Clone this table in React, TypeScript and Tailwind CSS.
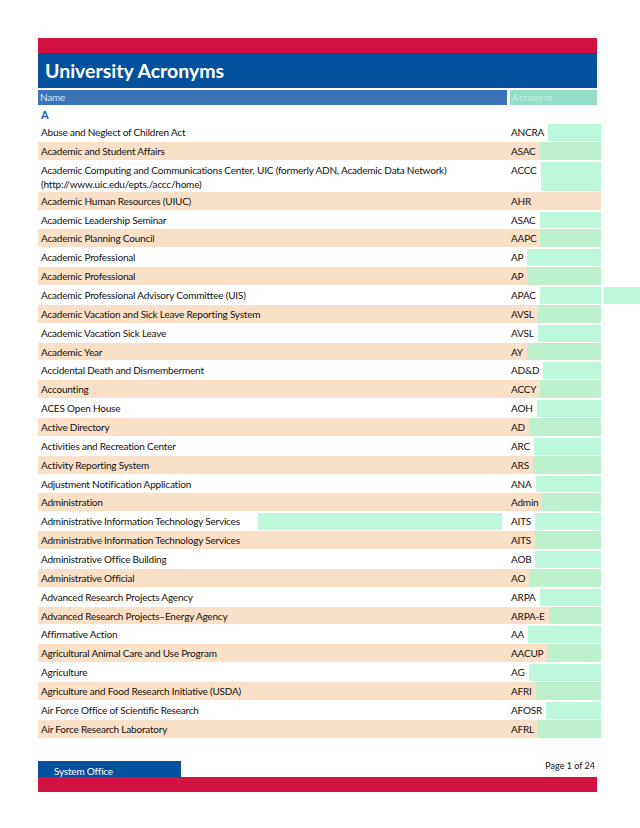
import React from "react";

type Row = {
  name: string;
  name2?: string;
  acr: string;
  mint?: boolean;
  nameMint?: boolean;
  outMint?: boolean;
};

const rows: Row[] = [
  { name: "Abuse and Neglect of Children Act", acr: "ANCRA", mint: true },
  { name: "Academic and Student Affairs", acr: "ASAC", mint: true },
  {
    name: "Academic Computing and Communications Center, UIC (formerly ADN, Academic Data Network)",
    name2: "(http://www.uic.edu/epts./accc/home)",
    acr: "ACCC",
    mint: true,
  },
  { name: "Academic Human Resources (UIUC)", acr: "AHR", mint: false },
  { name: "Academic Leadership Seminar", acr: "ASAC", mint: true },
  { name: "Academic Planning Council", acr: "AAPC", mint: true },
  { name: "Academic Professional", acr: "AP", mint: true },
  { name: "Academic Professional", acr: "AP", mint: true },
  { name: "Academic Professional Advisory Committee (UIS)", acr: "APAC", mint: true, outMint: true },
  { name: "Academic Vacation and Sick Leave Reporting System", acr: "AVSL", mint: true },
  { name: "Academic Vacation Sick Leave", acr: "AVSL", mint: true },
  { name: "Academic Year", acr: "AY", mint: true },
  { name: "Accidental Death and Dismemberment", acr: "AD&D", mint: true },
  { name: "Accounting", acr: "ACCY", mint: true },
  { name: "ACES Open House", acr: "AOH", mint: true },
  { name: "Active Directory", acr: "AD", mint: true },
  { name: "Activities and Recreation Center", acr: "ARC", mint: true },
  { name: "Activity Reporting System", acr: "ARS", mint: true },
  { name: "Adjustment Notification Application", acr: "ANA", mint: true },
  { name: "Administration", acr: "Admin", mint: true },
  { name: "Administrative Information Technology Services", acr: "AITS", mint: true, nameMint: true },
  { name: "Administrative Information Technology Services", acr: "AITS", mint: true },
  { name: "Administrative Office Building", acr: "AOB", mint: true },
  { name: "Administrative Official", acr: "AO", mint: true },
  { name: "Advanced Research Projects Agency", acr: "ARPA", mint: true },
  { name: "Advanced Research Projects\u2013Energy Agency", acr: "ARPA-E", mint: true },
  { name: "Affirmative Action", acr: "AA", mint: true },
  { name: "Agricultural Animal Care and Use Program", acr: "AACUP", mint: true },
  { name: "Agriculture", acr: "AG", mint: true },
  { name: "Agriculture and Food Research Initiative (USDA)", acr: "AFRI", mint: true },
  { name: "Air Force Office of Scientific Research", acr: "AFOSR", mint: true },
  { name: "Air Force Research Laboratory", acr: "AFRL", mint: true },
];

export default function App() {
  return (
    <div
      className="w-[640px] h-[828px] bg-white text-[#111111] pt-[38px]"
      style={{ fontFamily: "Lato, 'Liberation Sans', sans-serif" }}
    >
      {/* Title block */}
      <div className="ml-[38px] w-[559px]">
        <div className="h-[15px] bg-[#d21243]" />
        <div className="h-[35px] bg-[#03519c] flex items-center pl-[7px]">
          <span className="text-white font-bold text-[19.5px] leading-none">University Acronyms</span>
        </div>
        <div className="h-[2px]" />
        <div className="flex h-[15px]">
          <div className="w-[469px] bg-[#3b72b8] text-[#dce6f2] text-[10px] tracking-[-0.2px] leading-[15px] pl-[2px]">
            Name
          </div>
          <div className="w-[3px]" />
          <div
            className="flex-1 bg-[#95ddc9] text-[#c3f1e1] text-[11px] leading-[15px] pl-[1px]"
            style={{ fontFamily: "'Liberation Serif', serif" }}
          >
            Acronym
          </div>
        </div>
      </div>

      {/* Letter */}
      <div className="ml-[38px] h-[18px] flex items-center pl-[3px]">
        <span className="text-[11px] font-bold text-[#1b5aa6] leading-none">A</span>
      </div>

      {/* Rows */}
      <div className="flex flex-col">
        {rows.map((r, i) => {
          const peach = i % 2 === 1;
          const dbl = !!r.name2;
          return (
            <div key={i} className={`flex ${dbl ? "h-[31px]" : "h-[18.86px]"}`}>
              <div className="w-[38px]" />
              <div className={`w-[563px] flex ${peach ? "bg-[#fbe0c8] border-b border-white" : "bg-white"}`}>
                <div className="w-[472px] flex text-[10px] tracking-[-0.2px] pl-[3px]">
                  {dbl ? (
                    <div className="leading-[14px] pt-[2px] whitespace-nowrap">
                      <div>{r.name}</div>
                      <div>{r.name2}</div>
                    </div>
                  ) : (
                    <div className="leading-[18px] whitespace-nowrap">{r.name}</div>
                  )}
                  {r.nameMint && <div className="ml-auto mr-[8px] w-[244px] bg-[#bdf7dc] my-px" />}
                </div>
                <div className="flex-1 flex text-[10px] tracking-[-0.2px]">
                  <div className={`pl-[1px] whitespace-nowrap ${dbl ? "leading-[14px] pt-[2px]" : "leading-[18px]"}`}>
                    {r.acr}
                  </div>
                  {r.mint && (
                    <div className={`flex-1 ml-[4px] ${peach ? "bg-[#bdf1cd]" : "bg-[#bdf7dc] my-px"}`} />
                  )}
                </div>
              </div>
              {r.outMint && <div className="ml-[3px] w-[36px] bg-[#bdf7dc] my-px" />}
            </div>
          );
        })}
      </div>

      {/* Footer */}
      <div className="ml-[38px] w-[559px] mt-[22px]">
        <div className="flex h-[16px]">
          <div className="w-[143px] bg-[#03519c] text-white text-[10px] tracking-[-0.2px] leading-[16px] pl-[16px] pt-[2px]">
            System Office
          </div>
          <div className="flex-1 text-right text-[9px] leading-[12px] pr-[2px] -mt-[1px]">Page 1 of 24</div>
        </div>
        <div className="h-[15px] bg-[#d21243]" />
      </div>
    </div>
  );
}
